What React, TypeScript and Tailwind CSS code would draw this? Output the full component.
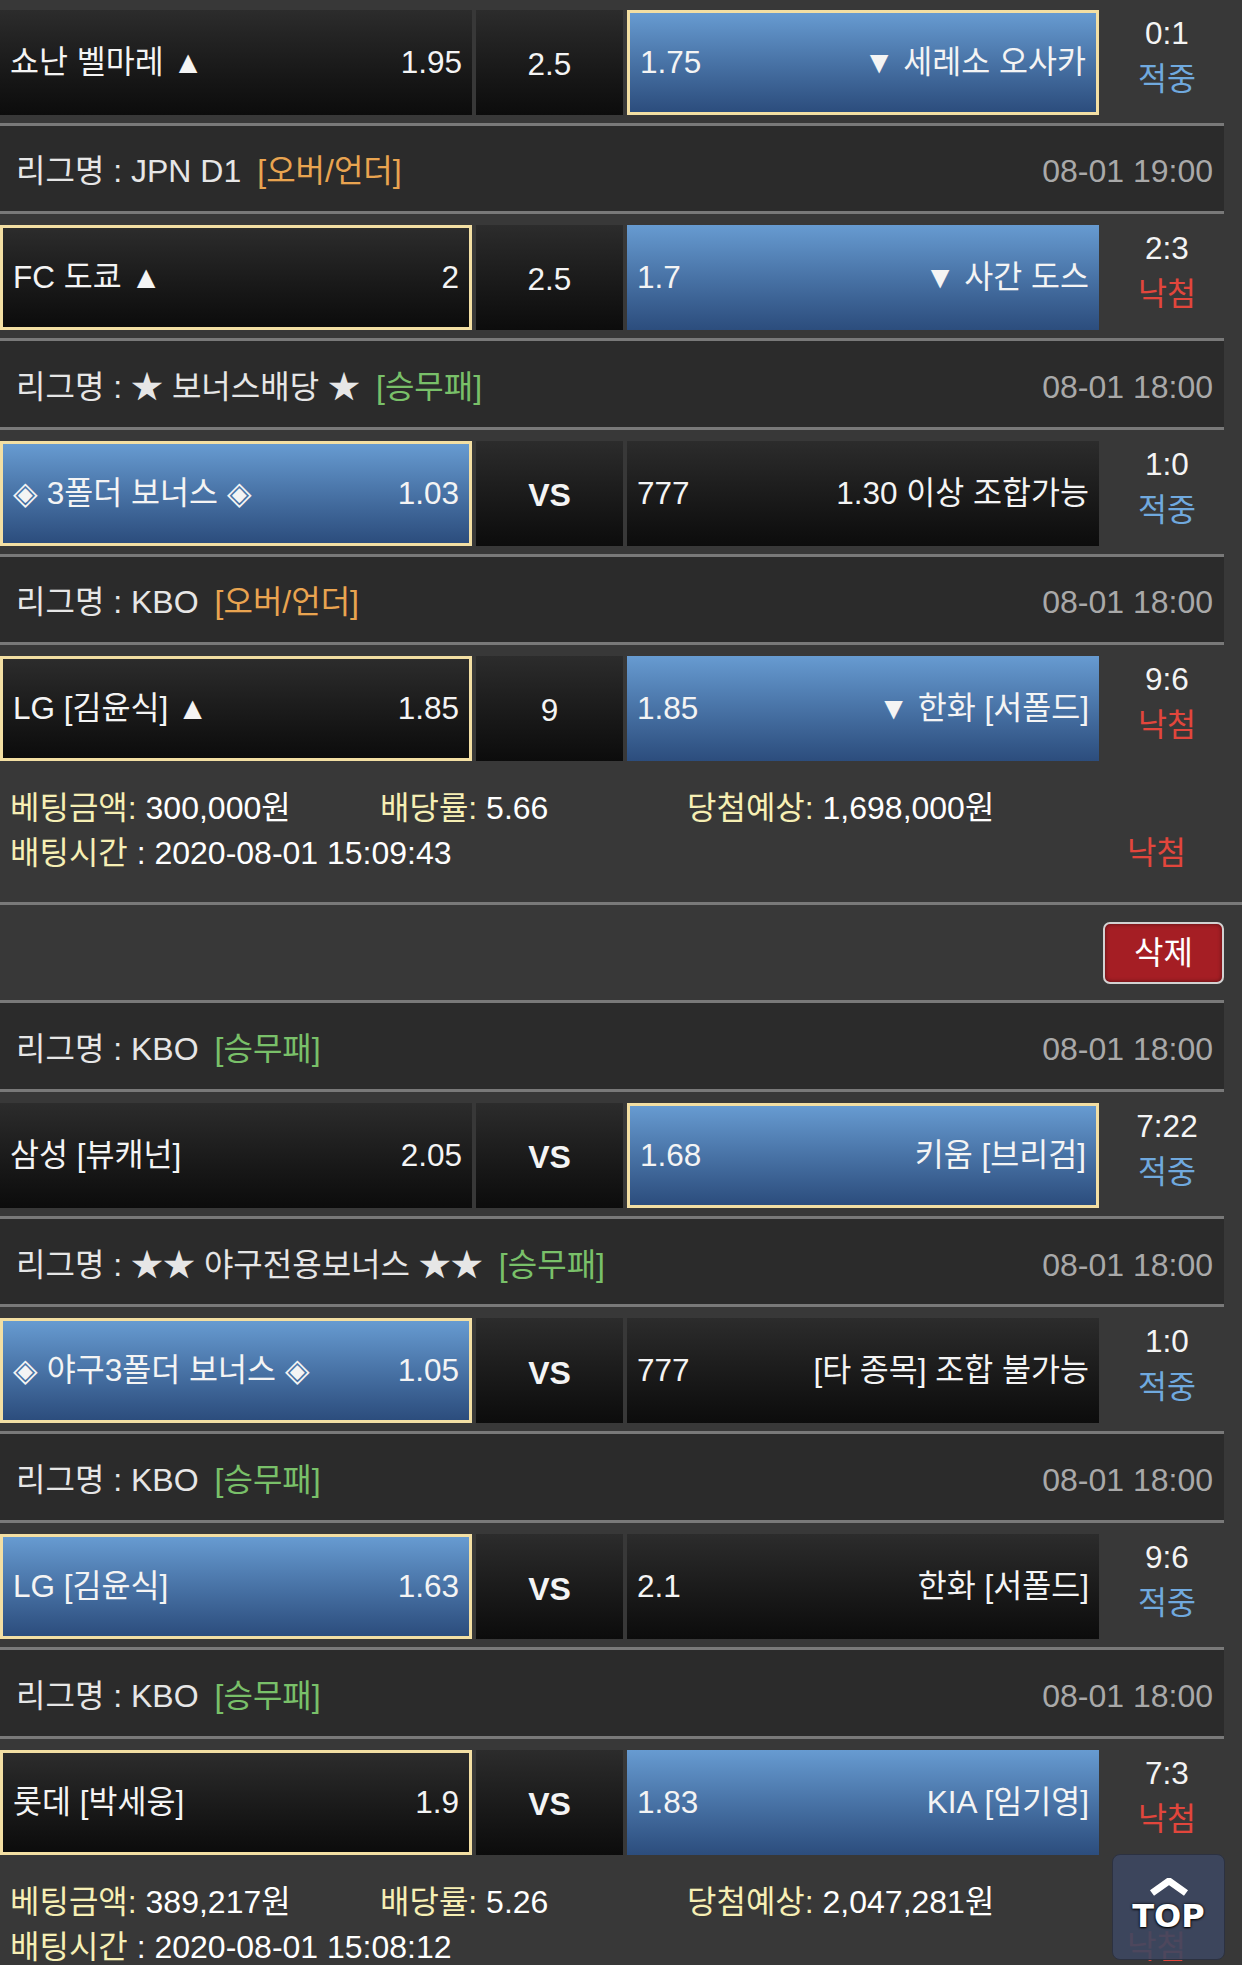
import clsx from "clsx";

type Side = { team: string; odds: string; blue?: boolean; pick?: boolean };

interface Game {
  league?: { name: string; tag: string; green?: boolean; date: string };
  home: Side;
  mid: string;
  away: Side;
  score: string;
  win: boolean;
}

interface Slip {
  games: Game[];
  amount: string;
  rate: string;
  expect: string;
  time: string;
}

const slips: Slip[] = [
  {
    games: [
      {
        home: { team: "쇼난 벨마레 ▲", odds: "1.95" },
        mid: "2.5",
        away: { team: "▼ 세레소 오사카", odds: "1.75", blue: true, pick: true },
        score: "0:1",
        win: true,
      },
      {
        league: { name: "리그명 : JPN D1", tag: "[오버/언더]", date: "08-01 19:00" },
        home: { team: "FC 도쿄 ▲", odds: "2", pick: true },
        mid: "2.5",
        away: { team: "▼ 사간 도스", odds: "1.7", blue: true },
        score: "2:3",
        win: false,
      },
      {
        league: { name: "리그명 : ★ 보너스배당 ★", tag: "[승무패]", green: true, date: "08-01 18:00" },
        home: { team: "◈ 3폴더 보너스 ◈", odds: "1.03", blue: true, pick: true },
        mid: "VS",
        away: { team: "1.30 이상 조합가능", odds: "777" },
        score: "1:0",
        win: true,
      },
      {
        league: { name: "리그명 : KBO", tag: "[오버/언더]", date: "08-01 18:00" },
        home: { team: "LG [김윤식] ▲", odds: "1.85", pick: true },
        mid: "9",
        away: { team: "▼ 한화 [서폴드]", odds: "1.85", blue: true },
        score: "9:6",
        win: false,
      },
    ],
    amount: "300,000원",
    rate: "5.66",
    expect: "1,698,000원",
    time: "2020-08-01 15:09:43",
  },
  {
    games: [
      {
        league: { name: "리그명 : KBO", tag: "[승무패]", green: true, date: "08-01 18:00" },
        home: { team: "삼성 [뷰캐넌]", odds: "2.05" },
        mid: "VS",
        away: { team: "키움 [브리검]", odds: "1.68", blue: true, pick: true },
        score: "7:22",
        win: true,
      },
      {
        league: { name: "리그명 : ★★ 야구전용보너스 ★★", tag: "[승무패]", green: true, date: "08-01 18:00" },
        home: { team: "◈ 야구3폴더 보너스 ◈", odds: "1.05", blue: true, pick: true },
        mid: "VS",
        away: { team: "[타 종목] 조합 불가능", odds: "777" },
        score: "1:0",
        win: true,
      },
      {
        league: { name: "리그명 : KBO", tag: "[승무패]", green: true, date: "08-01 18:00" },
        home: { team: "LG [김윤식]", odds: "1.63", blue: true, pick: true },
        mid: "VS",
        away: { team: "한화 [서폴드]", odds: "2.1" },
        score: "9:6",
        win: true,
      },
      {
        league: { name: "리그명 : KBO", tag: "[승무패]", green: true, date: "08-01 18:00" },
        home: { team: "롯데 [박세웅]", odds: "1.9", pick: true },
        mid: "VS",
        away: { team: "KIA [임기영]", odds: "1.83", blue: true },
        score: "7:3",
        win: false,
      },
    ],
    amount: "389,217원",
    rate: "5.26",
    expect: "2,047,281원",
    time: "2020-08-01 15:08:12",
  },
];

function Cell({ side, reverse }: { side: Side; reverse?: boolean }) {
  return (
    <div
      className={clsx(
        "box-border flex h-full w-[472px] items-center justify-between whitespace-nowrap px-[10px] text-[#f4f4f4]",
        side.blue ? "bg-linear-to-b from-[#679bd1] to-[#2c4d7d]" : "bg-linear-to-b from-[#2c2c2c] to-[#0c0c0c]",
        side.pick && "border-[3px] border-[#f3dfa3]"
      )}
    >
      {reverse ? (
        <>
          <span>{side.odds}</span>
          <span>{side.team}</span>
        </>
      ) : (
        <>
          <span>{side.team}</span>
          <span>{side.odds}</span>
        </>
      )}
    </div>
  );
}

function GameRow({ game, first, last }: { game: Game; first: boolean; last: boolean }) {
  return (
    <>
      {game.league && (
        <div className="box-border flex h-[91.6px] w-[1224px] items-center justify-between border-y-[3px] border-[#797979] bg-[#2b2b2b] pl-4 pr-[11px] pt-[6px] text-[32px]">
          <div className="flex items-center text-[#e6e6e6]">
            <span>{game.league.name}</span>
            <span className={clsx("ml-4", game.league.green ? "text-[#79c069]" : "text-[#e9a450]")}>
              {game.league.tag}
            </span>
          </div>
          <span className="text-[#a9a9a9]">{game.league.date}</span>
        </div>
      )}
      <div
        className={clsx(
          "flex",
          first && !game.league ? "pt-[10px]" : "pt-[11px]",
          last ? "pb-0" : first && !game.league ? "pb-[7.5px]" : "pb-[8px]"
        )}
      >
        <div className="flex h-[105px] gap-1">
          <Cell side={game.home} />
          <div
            className={clsx(
              "flex w-[147px] items-center justify-center bg-linear-to-b from-[#2c2c2c] to-[#0c0c0c] pt-1 text-[#f4f4f4]",
              game.mid === "VS" && "text-[32px] font-bold"
            )}
          >
            {game.mid}
          </div>
          <Cell side={game.away} reverse />
        </div>
        <div className="flex w-[136px] flex-col items-center leading-[46px]">
          <span className="text-[#f4f4f4]">{game.score}</span>
          <span className={game.win ? "text-[#70a9de]" : "text-[#e2463c]"}>{game.win ? "적중" : "낙첨"}</span>
        </div>
      </div>
    </>
  );
}

function Summary({ slip }: { slip: Slip }) {
  return (
    <div className="box-border h-[144px] border-b-[3px] border-[#797979] pt-[25px] text-[32px] leading-[45px]">
      <div className="flex pl-[10px]">
        <span className="w-[370px]">
          <span className="text-[#f6efb4]">베팅금액:</span> <span className="text-white">{slip.amount}</span>
        </span>
        <span className="w-[307px]">
          <span className="text-[#f6efb4]">배당률:</span> <span className="text-white">{slip.rate}</span>
        </span>
        <span>
          <span className="text-[#f6efb4]">당첨예상:</span> <span className="text-white">{slip.expect}</span>
        </span>
      </div>
      <div className="flex justify-between pl-[10px] pr-[56px]">
        <span>
          <span className="text-[#f6efb4]">배팅시간</span> <span className="text-white">: {slip.time}</span>
        </span>
        <span className="text-[#e2463c]">낙첨</span>
      </div>
    </div>
  );
}

export default function App() {
  return (
    <div
      className="relative h-[1965px] w-[1242px] overflow-hidden bg-[#383838] text-[31.5px]"
      style={{ fontFamily: '"Liberation Sans", "Noto Sans CJK KR", sans-serif' }}
    >
      {slips.map((slip, si) => (
        <div key={si}>
          {slip.games.map((g, gi) => (
            <GameRow key={gi} game={g} first={si === 0 && gi === 0} last={gi === slip.games.length - 1} />
          ))}
          <Summary slip={slip} />
          <div className="flex h-[95px] w-[1224px] items-center justify-end">
            <button className="box-border flex h-[62px] w-[121px] items-center justify-center rounded-[7px] border-2 border-[#d2d2d2] bg-[#a51e24] text-[32px] text-white shadow-[inset_0_0_4px_rgba(0,0,0,0.5)]">
              삭제
            </button>
          </div>
        </div>
      ))}

      <button className="absolute bottom-[5px] right-[17px] flex h-[106px] w-[113px] flex-col items-center justify-center rounded-[8px] border border-[#2c3140] bg-[#3d4761]/90 pb-1">
        <svg width="42" height="18" viewBox="0 0 42 18" className="mb-[4px]">
          <polyline points="4,15 21,3 38,15" fill="none" stroke="#ffffff" strokeWidth="7" strokeLinejoin="miter" />
        </svg>
        <span
          className="text-[32px] font-bold leading-none text-white [text-shadow:0_1px_2px_#000,0_0_3px_#000]"
          style={{ fontFamily: '"DejaVu Sans", sans-serif' }}
        >
          TOP
        </span>
      </button>
    </div>
  );
}
